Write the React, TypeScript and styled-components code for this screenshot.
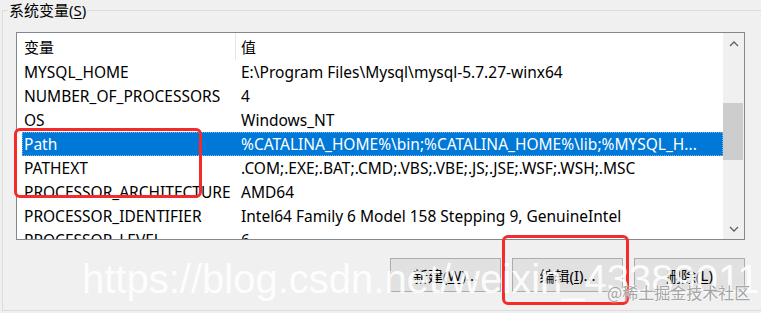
import React from 'react';
import styled, { createGlobalStyle } from 'styled-components';

const Global = createGlobalStyle`
  html, body {
    margin: 0;
    padding: 0;
    background: #f0f0f0;
    overflow: hidden;
  }
`;

const UI_FONT = `"Noto Sans", "Noto Sans CJK SC", sans-serif`;

const Window = styled.div`
  position: relative;
  width: 761px;
  height: 313px;
  overflow: hidden;
  background: #f0f0f0;
  font-family: ${UI_FONT};
  font-size: 15.5px;
  color: #000;
`;

const Group = styled.fieldset`
  box-sizing: border-box;
  margin: 0 0 0 2px;
  padding: 12px 0 0 5px;
  width: 800px;
  height: 311px;
  border: 1px solid #dcdcdc;
  border-right: none;
  min-width: 0;
`;

const Legend = styled.legend`
  padding: 0 1px;
  font-size: 15px;
  line-height: 20px;
  color: #000;
`;

const Key = styled.span`
  text-decoration: underline;
  text-underline-offset: 2px;
`;

const ListBox = styled.div`
  box-sizing: border-box;
  margin-left: 8px;
  width: 729px;
  height: 208px;
  border: 1px solid #828790;
  background: #fff;
  display: flex;
`;

const Table = styled.div`
  flex: 1;
  overflow: hidden;
  display: flex;
  flex-direction: column;
`;

const HeaderRow = styled.div`
  display: flex;
  height: 27px;
  flex-shrink: 0;
  font-size: 15px;
`;

const HeadCell = styled.div<{ $w?: number }>`
  box-sizing: border-box;
  ${(p) => (p.$w ? `width: ${p.$w}px;` : 'flex: 1;')}
  padding-left: ${(p) => (p.$w ? 7 : 5)}px;
  display: flex;
  align-items: center;
`;

const HeadSep = styled.div`
  width: 1px;
  background: #e5e5e5;
`;

const Row = styled.div<{ $selected?: boolean }>`
  box-sizing: border-box;
  display: flex;
  align-items: center;
  flex-shrink: 0;
  height: 24px;
  margin-left: 5px;
  white-space: nowrap;
  background: ${(p) => (p.$selected ? '#0078d7' : 'transparent')};
  color: ${(p) => (p.$selected ? '#fff' : '#000')};
  outline: ${(p) => (p.$selected ? '1px dotted rgba(255,255,255,0.45)' : 'none')};
  outline-offset: -1px;
`;

const NameCell = styled.div`
  box-sizing: border-box;
  width: 213px;
  padding-left: 2px;
  overflow: hidden;
  flex-shrink: 0;
`;

const ValueCell = styled.div`
  flex: 1;
  padding-left: 6px;
  overflow: hidden;
`;

const ScrollBar = styled.div`
  width: 21px;
  background: #f0f0f0;
  display: flex;
  flex-direction: column;
`;

const Arrow = styled.div`
  height: 21px;
  display: flex;
  align-items: center;
  justify-content: center;
  flex-shrink: 0;
`;

const Track = styled.div`
  flex: 1;
  padding: 49px 1px 0 0;
`;

const Thumb = styled.div`
  height: 57px;
  background: #cdcdcd;
`;

const ButtonRow = styled.div`
  margin: 18px 0 0 8px;
  width: 729px;
  display: flex;
  justify-content: flex-end;
  gap: 11px;
`;

const Button = styled.div`
  box-sizing: border-box;
  width: 111px;
  height: 34px;
  border: 1px solid #adadad;
  background: #e1e1e1;
  display: flex;
  align-items: center;
  justify-content: center;
  font-size: 15px;
`;

const Mark = styled.div<{ $x: number; $y: number; $w: number; $h: number }>`
  position: absolute;
  left: ${(p) => p.$x}px;
  top: ${(p) => p.$y}px;
  width: ${(p) => p.$w}px;
  height: ${(p) => p.$h}px;
  box-sizing: border-box;
  border: 3px solid #f52a2a;
  border-radius: 6px;
`;

const Watermark = styled.div`
  position: absolute;
  left: 82px;
  top: 259px;
  font-family: "Liberation Sans", Arial, sans-serif;
  font-size: 40px;
  line-height: 40px;
  color: rgba(255, 255, 255, 0.9);
  white-space: nowrap;
`;

const Brand = styled.div`
  position: absolute;
  left: 607px;
  top: 282px;
  font-family: "Noto Sans CJK SC", sans-serif;
  font-size: 16px;
  line-height: 20px;
  color: #a4a4a4;
  text-shadow: 0 0 2px #fff, 0 0 1px #fff;
  white-space: nowrap;
`;

const Chevron = ({ down }: { down?: boolean }) => (
  <svg width="10" height="6" viewBox="0 0 10 6">
    <path
      d={down ? 'M1 1 L5 5 L9 1' : 'M1 5 L5 1 L9 5'}
      fill="none"
      stroke="#606060"
      strokeWidth="1.3"
    />
  </svg>
);

const rows = [
  { name: 'MYSQL_HOME', value: 'E:\\Program Files\\Mysql\\mysql-5.7.27-winx64' },
  { name: 'NUMBER_OF_PROCESSORS', value: '4' },
  { name: 'OS', value: 'Windows_NT' },
  {
    name: 'Path',
    value: '%CATALINA_HOME%\\bin;%CATALINA_HOME%\\lib;%MYSQL_H...',
    selected: true,
  },
  { name: 'PATHEXT', value: '.COM;.EXE;.BAT;.CMD;.VBS;.VBE;.JS;.JSE;.WSF;.WSH;.MSC' },
  { name: 'PROCESSOR_ARCHITECTURE', value: 'AMD64' },
  { name: 'PROCESSOR_IDENTIFIER', value: 'Intel64 Family 6 Model 158 Stepping 9, GenuineIntel' },
  { name: 'PROCESSOR_LEVEL', value: '6' },
];

export default function App() {
  return (
    <Window>
      <Global />
      <Group>
        <Legend>
          系统变量(<Key>S</Key>)
        </Legend>
        <ListBox>
          <Table>
            <HeaderRow>
              <HeadCell $w={218}>变量</HeadCell>
              <HeadSep />
              <HeadCell>值</HeadCell>
            </HeaderRow>
            {rows.map((r) => (
              <Row key={r.name} $selected={r.selected}>
                <NameCell>{r.name}</NameCell>
                <ValueCell>{r.value}</ValueCell>
              </Row>
            ))}
          </Table>
          <ScrollBar>
            <Arrow>
              <Chevron />
            </Arrow>
            <Track>
              <Thumb />
            </Track>
            <Arrow>
              <Chevron down />
            </Arrow>
          </ScrollBar>
        </ListBox>
        <ButtonRow>
          <Button>
            新建(<Key>W</Key>)...
          </Button>
          <Button>
            编辑(<Key>I</Key>)...
          </Button>
          <Button>
            删除(<Key>L</Key>)
          </Button>
        </ButtonRow>
      </Group>
      <Mark $x={14} $y={128} $w={188} $h={70} />
      <Mark $x={502} $y={235} $w={127} $h={70} />
      <Watermark>https://blog.csdn.net/weixin_43389011</Watermark>
      <Brand>@稀土掘金技术社区</Brand>
    </Window>
  );
}
